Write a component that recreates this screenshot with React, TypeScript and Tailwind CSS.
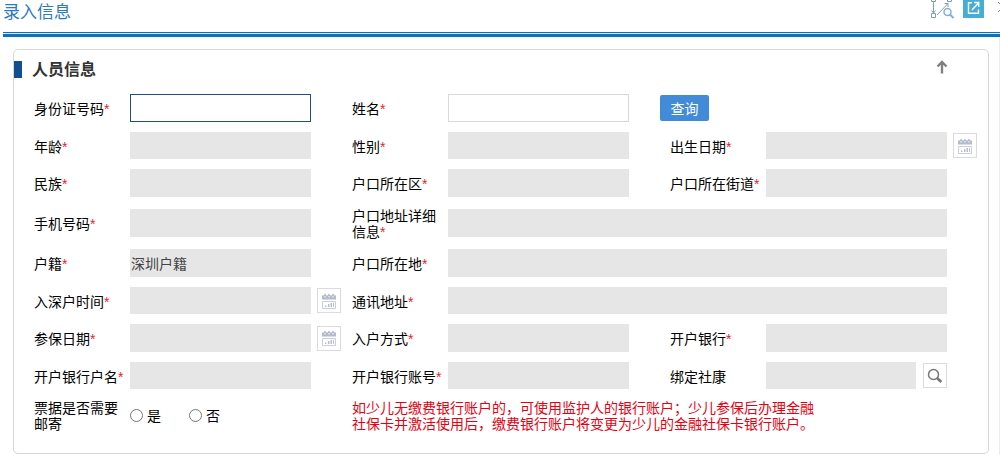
import React from "react";

const FONT = "font-['Noto_Sans_CJK_SC','Liberation_Sans',sans-serif]";

function CalendarIcon() {
  return (
    <svg width="14" height="16" viewBox="0 0 14 16" aria-hidden="true">
      <path d="M0 2.500h1.500L3 .5l1.500 2h1L7 .5l1.500 2h1l1.500-2 1.500 2H14V6.500H0z" fill="#b3bacb" />
      <path d="M2.500 3h1v1.500h-1zM6.500 3h1v1.500h-1zM10.500 3h1v1.500h-1z" fill="#fff" />
      <path d="M.5 8.500h13v7H.5z" fill="none" stroke="#c9cedb" />
      <path d="M3 12.500h1.500V14H3zM6 11h1.500v3H6zM8.500 10H10v4H8.500zM11 10h1v4h-1z" fill="#b9bfd0" />
    </svg>
  );
}

function SearchIcon() {
  return (
    <svg width="16" height="16" viewBox="0 0 16 16" fill="none" stroke="#777" aria-hidden="true">
      <circle cx="6.5" cy="6.5" r="5" strokeWidth="1.5" />
      <path d="M10.3 10.3l4 3.7" strokeWidth="2.6" />
    </svg>
  );
}

function FlowSearchIcon() {
  return (
    <svg width="24" height="19" viewBox="0 0 24 19" fill="none" stroke="#7f9dbd" aria-hidden="true">
      <path d="M.5 -2.500h4v4h-4zM16.500 -2.500h4v4h-4zM.5 13.500h4v4h-4z" />
      <path d="M2.500 2v11M.5 10.500l2 2.500 2-2.500M6 15L17 3.500M13.500 3.500H17V7" />
      <circle cx="16.500" cy="12" r="3.500" stroke="#7fb0dc" strokeWidth="1.500" />
      <path d="M19 14.500l3.500 3.500" stroke="#7fb0dc" strokeWidth="2" />
    </svg>
  );
}

function OpenIcon() {
  return (
    <svg width="21" height="18" viewBox="0 0 21 18" fill="none" stroke="#fff" aria-hidden="true">
      <path d="M9 2.750H5.500v10.500h10V9.500" strokeWidth="1.400" />
      <path d="M9 10l6.500-7M11 2.500h4.700V7" strokeWidth="1.500" />
    </svg>
  );
}

const iconButton = "flex h-[25px] w-6 shrink-0 items-center justify-center border border-[#d9dbe0] bg-white";

type FieldProps = {
  id: string;
  label: string;
  optional?: boolean;
  wide?: boolean;
  kind?: "text" | "date" | "search";
  value?: string;
  inputClass?: string;
};

function Field({ id, label, optional, wide, kind = "text", value, inputClass = "bg-[#e6e6e6]" }: FieldProps) {
  return (
    <div
      className={
        wide
          ? "col-span-2 grid grid-cols-[96px_minmax(0,1fr)_41px] items-center"
          : "grid grid-cols-[96px_minmax(0,1fr)_41px] items-center"
      }
    >
      <label htmlFor={id} className="pr-1 leading-4">
        {label}
        {!optional && <span className="font-['Liberation_Sans',sans-serif] leading-none text-[#e8222a]">*</span>}
      </label>
      <div className="flex items-center gap-[7px] self-stretch">
        <input
          id={id}
          type="text"
          defaultValue={value}
          className={`h-full max-h-7 min-w-0 flex-1 px-px text-[#444] outline-none ${inputClass}`}
        />
        {kind === "search" && (
          <button type="button" aria-label="查找" className={iconButton}>
            <SearchIcon />
          </button>
        )}
      </div>
      {kind === "date" && (
        <button type="button" aria-label={label} className={`ml-1.5 ${iconButton}`}>
          <CalendarIcon />
        </button>
      )}
    </div>
  );
}

function Row({ children }: { children: React.ReactNode }) {
  return <div className="grid grid-cols-3 odd:min-h-7 even:min-h-[27px]">{children}</div>;
}

export default function App() {
  return (
    <div className={`${FONT} bg-white text-sm leading-4 text-black`}>
      <header className="ml-[3px]">
        <div className="flex h-8 items-start justify-between">
          <h1 className="text-[17px] leading-[22px] text-[#2a79c4]">录入信息</h1>
          <div className="flex items-start">
            <button type="button" aria-label="流程查询">
              <FlowSearchIcon />
            </button>
            <button type="button" aria-label="打开" className="ml-2 bg-[#45aed2]">
              <OpenIcon />
            </button>
            <svg className="ml-3.5" width="2" height="18" viewBox="0 0 2 18" stroke="#5d93c4" aria-hidden="true">
              <path d="M0 2l3 3M0 12l3-3" />
            </svg>
          </div>
        </div>
        <div className="h-[5px] border-t border-b-3 border-[#1070b8] bg-[#c9effc]" />
      </header>

      <main className="border-r border-[#ececec] pt-3 pr-2.5 pb-px pl-[13px]">
        <section className="rounded-[5px] border border-[#d8d8d8] pb-[22px]">
          <div className="flex h-11 items-center pr-10 pb-1.5">
            <span className="h-[17px] w-2 bg-[#124e90]" />
            <h2 className="ml-2.5 flex-1 pb-0.5 text-base leading-5 font-bold text-[#333]">人员信息</h2>
            <button type="button" aria-label="收起" className="pb-1">
              <svg width="12" height="14" viewBox="0 0 12 14" fill="none" stroke="#808080" strokeWidth="2.4" aria-hidden="true">
                <path d="M6 13.500V2.500M1.500 6.500L6 2l4.500 4.500" />
              </svg>
            </button>
          </div>

          <form className="flex flex-col gap-2.5 pl-5">
            <Row>
              <Field id="idNo" label="身份证号码" inputClass="border border-[#1d4f86] bg-white" />
              <Field id="name" label="姓名" inputClass="border border-[#d9d9d9] bg-white" />
              <div className="flex items-center">
                <button type="button" className="-ml-2.5 h-[26px] w-[49px] rounded-xs bg-[#428bd9] text-white">
                  查询
                </button>
              </div>
            </Row>
            <Row>
              <Field id="age" label="年龄" />
              <Field id="gender" label="性别" />
              <Field id="birthday" label="出生日期" kind="date" />
            </Row>
            <Row>
              <Field id="nation" label="民族" />
              <Field id="district" label="户口所在区" />
              <Field id="street" label="户口所在街道" />
            </Row>
            <Row>
              <Field id="mobile" label="手机号码" />
              <Field id="addressDetail" label="户口地址详细信息" wide />
            </Row>
            <Row>
              <Field id="household" label="户籍" value="深圳户籍" />
              <Field id="householdPlace" label="户口所在地" wide />
            </Row>
            <Row>
              <Field id="moveInDate" label="入深户时间" kind="date" />
              <Field id="mailAddress" label="通讯地址" wide />
            </Row>
            <Row>
              <Field id="insuredDate" label="参保日期" kind="date" />
              <Field id="moveInWay" label="入户方式" />
              <Field id="bank" label="开户银行" />
            </Row>
            <Row>
              <Field id="accountName" label="开户银行户名" />
              <Field id="accountNo" label="开户银行账号" />
              <Field id="clinic" label="绑定社康" optional kind="search" />
            </Row>
            <Row>
              <div role="radiogroup" aria-labelledby="mailLabel" className="grid grid-cols-[96px_minmax(0,1fr)] items-center">
                <span id="mailLabel" className="pr-1">票据是否需要邮寄</span>
                <div className="flex gap-7">
                  <label className="flex items-center gap-1">
                    <input type="radio" name="mail" value="1" className="size-[13px]" />是
                  </label>
                  <label className="flex items-center gap-1">
                    <input type="radio" name="mail" value="0" className="size-[13px]" />否
                  </label>
                </div>
              </div>
              <p className="col-span-2 max-w-[464px] text-[#e60012]">
                如少儿无缴费银行账户的，可使用监护人的银行账户；少儿参保后办理金融社保卡并激活使用后，缴费银行账户将变更为少儿的金融社保卡银行账户。
              </p>
            </Row>
          </form>
        </section>
      </main>
    </div>
  );
}
